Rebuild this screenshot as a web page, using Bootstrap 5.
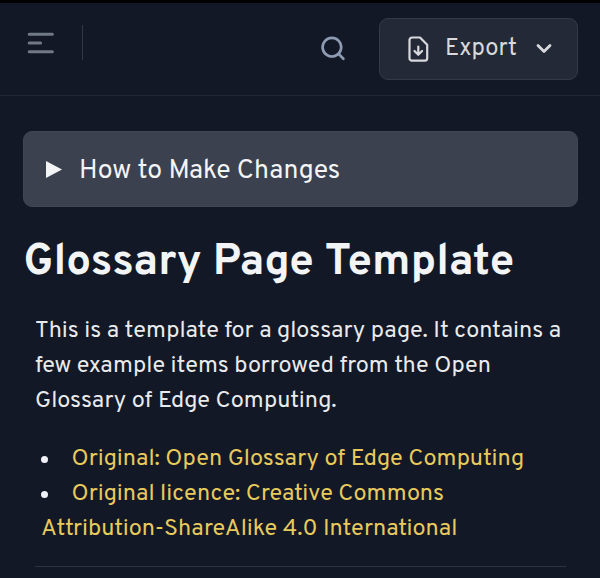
<!DOCTYPE html>
<html lang="en" data-bs-theme="dark">
<head>
<meta charset="utf-8">
<meta name="viewport" content="width=device-width, initial-scale=1">
<title>Glossary Page Template</title>
<link href="https://cdn.jsdelivr.net/npm/bootstrap@5.3.0/dist/css/bootstrap.min.css" rel="stylesheet">
<style>
body{background:#121826;color:#e9eaec;font-family:Overpass,Roboto,sans-serif;font-size:23.45px;line-height:35px;height:578px;overflow:hidden}
.topbar{height:96px;border-top:3px solid #000;border-bottom:1px solid #222836;padding:0 22px 0 27px}
.menu-btn{width:28px;height:24px;margin-top:-12px}
.divider{width:1px;height:35px;background:#323845;margin:-13px 0 0 27px}
.export-btn{width:199px;height:62px;margin-top:-1px;background:#232936;border:1px solid #343a47;border-radius:9px;color:#d7d9dd;padding:0 0 0 28px;font-size:23.7px}
.export-btn span{margin-left:16px;padding-top:3px}
.export-btn .caret{margin-left:19px}
.search-btn{margin-right:33px}
.how-to{height:76px;margin:35px 22px 0 23px;border:1px solid #404654;background:#3c4150;border-radius:9px;color:#f3f4f6;padding-left:22px;font-size:26.6px}
.how-to span{margin-left:17px;padding-top:4px}
.page-title{font-size:43.9px;line-height:50px;font-weight:700;color:#f3f4f6;margin:31px 0 0 23.5px;white-space:nowrap}
.intro{margin:26px 0 0 35px;white-space:nowrap}
.intro span,.sources a{display:block}
.sources{margin:23px 0 0 35px;white-space:nowrap}
.sources a{color:#e8ca5c;text-decoration:none}
.dot{width:7px;height:7px;margin:14px 23.5px 0 6px;border-radius:50%;background:#f0f2f7}
.sources .hang{padding-left:6px}
.rule{height:1px;background:#2c323f;margin:19px 34px 0 35px}
</style>
</head>
<body>
<header class="topbar d-flex align-items-center">
  <svg class="menu-btn" viewBox="0 0 28 24" stroke="#717887" stroke-width="3" stroke-linecap="round"><path d="M2.2 3.2H25.4M2.2 12H13.6M2.2 20.8H25.4"/></svg>
  <div class="divider"></div>
  <svg class="search-btn ms-auto" width="26" height="26" viewBox="0 0 26 26" fill="none" stroke="#8f9bb3" stroke-width="2.7" stroke-linecap="round"><circle cx="11.9" cy="11.2" r="9.3"/><path d="M18.6 17.9l4.8 4.8"/></svg>
  <button type="button" class="btn export-btn d-flex align-items-center">
    <svg width="21" height="26" viewBox="0 0 21 26" fill="none" stroke="#d7d9dd" stroke-width="2.2" stroke-linecap="round" stroke-linejoin="round"><path d="M4 1.5H12L19.2 8.8V22.2A2.5 2.5 0 0 1 16.7 24.7H4A2.5 2.5 0 0 1 1.5 22.2V4A2.5 2.5 0 0 1 4 1.5ZM10.3 10.6V18.6M6.5 15L10.3 18.8L14.1 15"/></svg>
    <span>Export</span>
    <svg class="caret" width="16" height="11" viewBox="0 0 16 11" fill="none" stroke="#d7d9dd" stroke-width="2.8" stroke-linecap="round" stroke-linejoin="round"><path d="M2 2.5L8 8.5L14 2.5"/></svg>
  </button>
</header>
<main>
  <div class="how-to d-flex align-items-center">
    <svg width="16" height="17" viewBox="0 0 16 17" fill="#f3f4f6"><path d="M0 0L16 8.5L0 17Z"/></svg>
    <span>How to Make Changes</span>
  </div>
  <h1 class="page-title">Glossary Page Template</h1>
  <p class="intro mb-0"><span>This is a template for a glossary page. It contains a</span><span>few example items borrowed from the Open</span><span>Glossary of Edge Computing.</span></p>
  <ul class="sources list-unstyled mb-0">
    <li class="d-flex"><i class="dot"></i><a href="#">Original: Open Glossary of Edge Computing</a></li>
    <li><div class="d-flex"><i class="dot"></i><a href="#">Original licence: Creative Commons</a></div><a href="#" class="hang">Attribution-ShareAlike 4.0 International</a></li>
  </ul>
  <div class="rule"></div>
</main>
<script src="https://cdn.jsdelivr.net/npm/bootstrap@5.3.0/dist/js/bootstrap.bundle.min.js"></script>
</body>
</html>
